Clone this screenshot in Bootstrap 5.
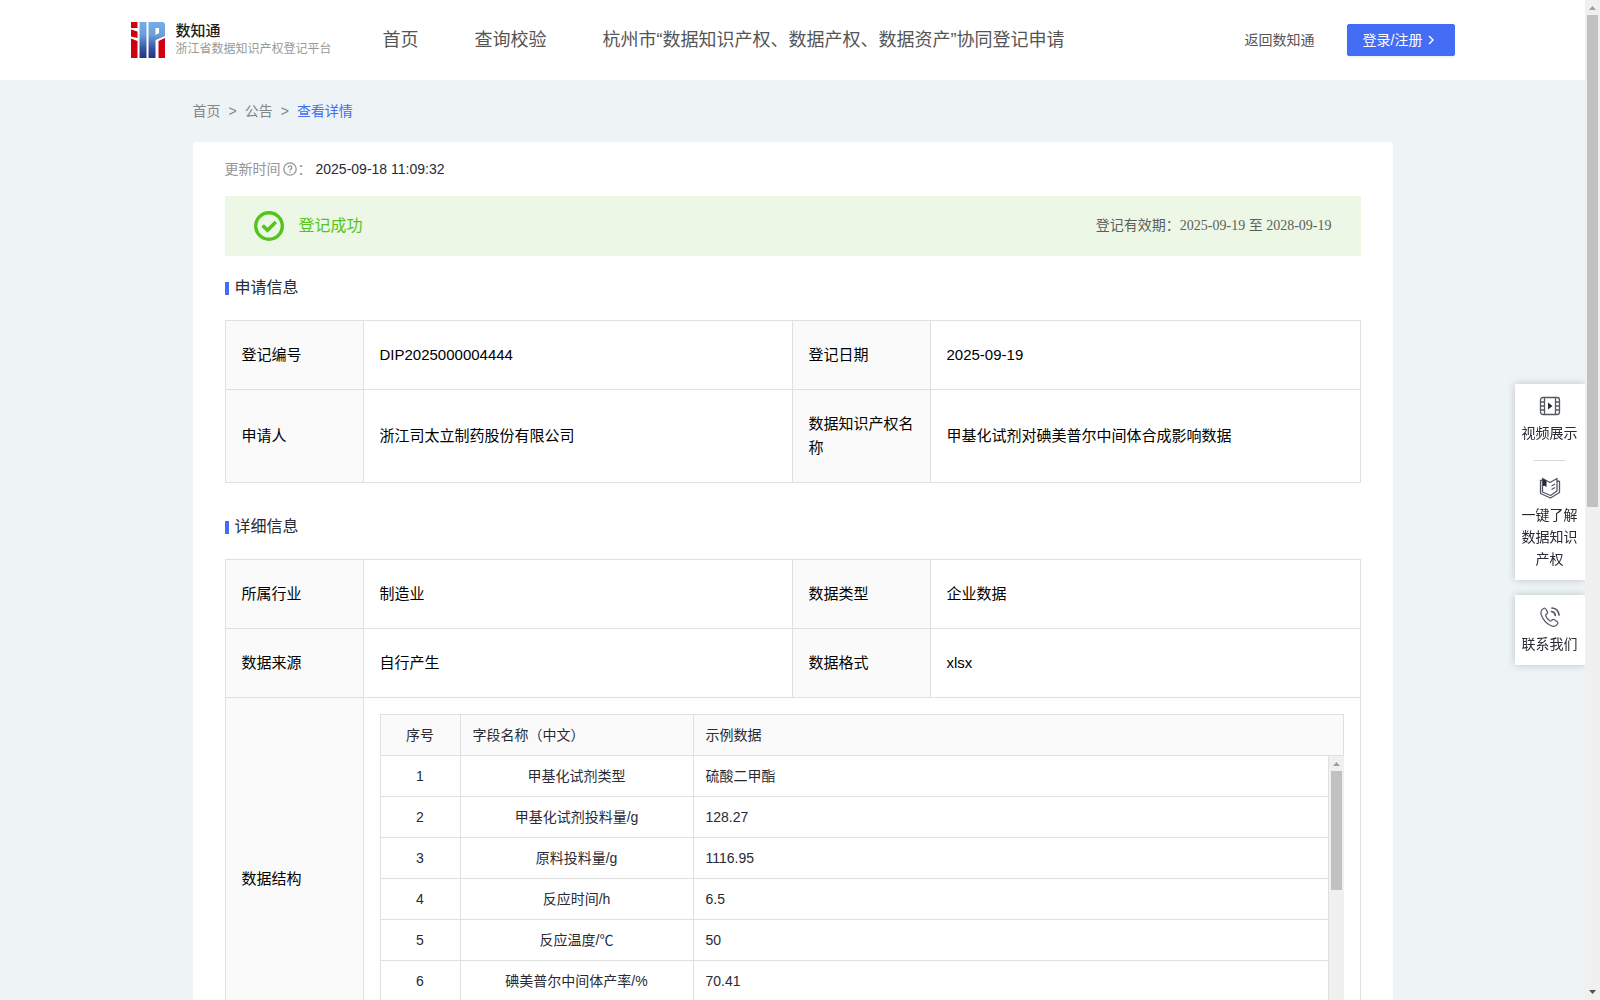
<!DOCTYPE html>
<html lang="zh-CN">
<head>
<meta charset="utf-8">
<meta name="viewport" content="width=device-width, initial-scale=1">
<title>数知通 - 查看详情</title>
<link href="https://cdn.jsdelivr.net/npm/bootstrap@5.3.0/dist/css/bootstrap.min.css" rel="stylesheet">
<style>
:root { --brand: #446df5; --line: #e0e0e0; --ink: #282a35; }
body { font-family: "Liberation Sans", "Noto Sans CJK SC", sans-serif; font-size: 14px; line-height: 22px; color: var(--ink); background: #eef3f6; }
a { text-decoration: none; }
.site-head { height: 80px; }
.head-inner { max-width: 1324px; }
.brand-name { font-size: 15px; line-height: 18px; font-weight: 500; color: #1c1c1c; font-family: "Noto Sans CJK SC", sans-serif; }
.brand-sub { font-size: 12px; line-height: 20px; color: #999; }
.brand-box { width: 224px; gap: 11px; }
.main-nav { gap: 56px; margin-left: 28px; }
.main-nav a { font-size: 18px; line-height: 26px; color: #555; }
.back-link { color: #555; margin-right: 32px; }
.login-btn { --bs-btn-font-size: 14px; --bs-btn-bg: var(--brand); --bs-btn-border-color: var(--brand); --bs-btn-border-radius: 2px; height: 32px; padding: 0 15px; width: 108px; box-shadow: 0 2px 0 rgba(0,0,0,.05); }
.page-col { max-width: 1200px; }
.crumbs { --bs-breadcrumb-divider: ">"; --bs-breadcrumb-item-padding-x: 8px; --bs-breadcrumb-margin-bottom: 0; --bs-breadcrumb-divider-color: #858585; padding: 20px 0; }
.crumbs a { color: #858585; }
.crumbs .active { color: var(--brand); }
.sheet { border-radius: 4px; padding: 16px 32px 32px; }
.muted-label { color: #959595; }
.help-mark { margin: 0 1px 0 2px; }
.ok-banner { height: 60px; background: #ecf7e6; padding: 0 29px; margin-top: 16px; }
.ok-text { font-size: 16px; color: #52c41a; margin-left: 15px; }
.valid-text { font-family: "Liberation Serif", "Noto Sans CJK SC", serif; color: #5c5f5a; }
.sect { font-size: 16px; line-height: 24px; font-weight: 400; margin: 20px 0; gap: 6px; }
.sect::before { content: ""; width: 4px; height: 13px; background: var(--brand); margin-top: 1px; }
.info-table { width: 100%; table-layout: fixed; border-collapse: separate; border-spacing: 0; border: solid var(--line); border-width: 1px 0 0 1px; font-size: 15px; line-height: 24px; color: #000; }
.info-table > tbody > tr > * { border: solid var(--line); border-width: 0 1px 1px 0; padding: 22px 16px; font-weight: 400; vertical-align: middle; }
.info-table > tbody > tr > th { background: #fafafa; }
.info-table > tbody > tr > .nest { padding: 16px; }
.info-table + .sect { margin-top: 32px; }
.w-label { width: 138px; }
.w-value { width: 429px; }
.grid-box { border: solid var(--line); border-width: 1px 0 0 1px; font-size: 14px; line-height: 22px; color: var(--ink); }
.grid-box table { width: 100%; table-layout: fixed; border-collapse: separate; border-spacing: 0; }
.grid-box th, .grid-box td { border: solid var(--line); border-width: 0 1px 1px 0; padding: 9px 12px; font-weight: 400; }
.grid-box th { background: #fafafa; }
.w-no { width: 80px; }
.w-field { width: 233px; }
.grid-body { height: 287px; }
.bar-track { width: 15px; background: #f0f0f0; padding: 0 2px; }
.bar-arrow { height: 15px; width: 11px; }
.bar-thumb { background: #c1c1c1; }
.thumb-grid { height: 119px; }
.thumb-page { height: 50.7%; }
.side-dock { right: 15px; top: 384px; width: 70px; gap: 15px; }
.side-card { background: #fff; box-shadow: 0 0 8px rgba(0,0,0,.2); padding: 11px 7px 10px 6px; clip-path: inset(-10px 0 -10px -10px); }
.side-card a { color: var(--ink); gap: 5px; }
.side-card hr { width: 32px; border-color: #a0a0a0; opacity: .4; margin: 16px auto; }
</style>
<script src="https://cdn.jsdelivr.net/npm/bootstrap@5.3.0/dist/js/bootstrap.bundle.min.js"></script>
</head>
<body class="vh-100 overflow-hidden d-flex">

<div class="flex-fill overflow-hidden">
  <header class="site-head bg-white d-flex align-items-center">
    <div class="head-inner w-100 mx-auto d-flex align-items-center">
      <a href="#" class="brand-box d-flex align-items-center flex-shrink-0">
        <svg width="34" height="36" viewBox="0 0 34 36" aria-hidden="true">
          <defs><linearGradient id="blue" x1="0" y1="0" x2="0" y2="36" gradientUnits="userSpaceOnUse"><stop offset="0" stop-color="#74aee6"/><stop offset=".35" stop-color="#6d9fdb"/><stop offset=".75" stop-color="#34509e"/><stop offset="1" stop-color="#223580"/></linearGradient></defs>
          <path fill="#d2000f" d="M0 0h6.500v6H0zM0 7.500l6.500 2V16L0 14.500zM0 16.500L6.500 19v17H0zM27.500 19l6.500-3v20h-6.500z"/>
          <path fill="url(#blue)" fill-rule="evenodd" d="M8.500 0h7v36h-7zM17.500 0H31q3 0 3 3v11l-9.500 4v18h-7zM24.500 6v7l3.500-2V6z"/>
        </svg>
        <span>
          <span class="brand-name d-block">数知通</span>
          <span class="brand-sub d-block">浙江省数据知识产权登记平台</span>
        </span>
      </a>
      <nav class="main-nav d-flex text-nowrap">
        <a href="#">首页</a>
        <a href="#">查询校验</a>
        <a href="#">杭州市“数据知识产权、数据产权、数据资产”协同登记申请</a>
      </nav>
      <a href="#" class="back-link ms-auto text-nowrap">返回数知通</a>
      <button type="button" class="login-btn btn btn-primary d-flex align-items-center text-nowrap">登录/注册
        <svg class="ms-1" width="10" height="10" viewBox="0 0 10 10" fill="none" stroke="#fff" stroke-width="1.400" aria-hidden="true"><path d="M3 1l4 4-4 4"/></svg>
      </button>
    </div>
  </header>

  <main class="page-col mx-auto">
    <nav aria-label="breadcrumb">
      <ol class="breadcrumb crumbs">
        <li class="breadcrumb-item"><a href="#">首页</a></li>
        <li class="breadcrumb-item"><a href="#">公告</a></li>
        <li class="breadcrumb-item active" aria-current="page">查看详情</li>
      </ol>
    </nav>

    <div class="sheet bg-white">
      <div class="d-flex align-items-center">
        <span class="muted-label">更新时间</span>
        <svg class="help-mark" width="14" height="14" viewBox="0 0 14 14" fill="none" stroke="#959595" stroke-width="1.300" aria-hidden="true"><circle cx="7" cy="7" r="6.200"/><path d="M5.200 5.600a1.800 1.800 0 1 1 2.500 1.700q-.7.300-.7 1.200M7 9.600v1.200"/></svg>
        <span class="muted-label">：</span>
        <span class="ms-1">2025-09-18 11:09:32</span>
      </div>

      <div class="ok-banner d-flex align-items-center">
        <svg width="30" height="30" viewBox="0 0 30 30" fill="none" stroke="#52c41a" aria-hidden="true"><circle cx="15" cy="15" r="13.300" stroke-width="3.400"/><path d="M8.600 14.400l4.900 4.900 8.300-8.300" stroke-width="3.600"/></svg>
        <span class="ok-text">登记成功</span>
        <span class="valid-text ms-auto">登记有效期：2025-09-19 至 2028-09-19</span>
      </div>

      <h2 class="sect d-flex align-items-center">申请信息</h2>
      <table class="info-table">
        <colgroup><col class="w-label"><col class="w-value"><col class="w-label"><col></colgroup>
        <tbody>
          <tr><th scope="row">登记编号</th><td>DIP2025000004444</td><th scope="row">登记日期</th><td>2025-09-19</td></tr>
          <tr><th scope="row">申请人</th><td>浙江司太立制药股份有限公司</td><th scope="row">数据知识产权名称</th><td>甲基化试剂对碘美普尔中间体合成影响数据</td></tr>
        </tbody>
      </table>

      <h2 class="sect d-flex align-items-center">详细信息</h2>
      <table class="info-table">
        <colgroup><col class="w-label"><col class="w-value"><col class="w-label"><col></colgroup>
        <tbody>
          <tr><th scope="row">所属行业</th><td>制造业</td><th scope="row">数据类型</th><td>企业数据</td></tr>
          <tr><th scope="row">数据来源</th><td>自行产生</td><th scope="row">数据格式</th><td>xlsx</td></tr>
          <tr>
            <th scope="row">数据结构</th>
            <td colspan="3" class="nest">
              <div class="grid-box">
                <table>
                  <colgroup><col class="w-no"><col class="w-field"><col></colgroup>
                  <thead><tr><th scope="col" class="text-center">序号</th><th scope="col">字段名称（中文）</th><th scope="col">示例数据</th></tr></thead>
                </table>
                <div class="grid-body d-flex overflow-hidden">
                  <div class="flex-fill">
                    <table aria-label="字段示例">
                      <colgroup><col class="w-no"><col class="w-field"><col></colgroup>
                      <tbody>
                        <tr><td class="text-center">1</td><td class="text-center">甲基化试剂类型</td><td>硫酸二甲酯</td></tr>
                        <tr><td class="text-center">2</td><td class="text-center">甲基化试剂投料量/g</td><td>128.27</td></tr>
                        <tr><td class="text-center">3</td><td class="text-center">原料投料量/g</td><td>1116.95</td></tr>
                        <tr><td class="text-center">4</td><td class="text-center">反应时间/h</td><td>6.5</td></tr>
                        <tr><td class="text-center">5</td><td class="text-center">反应温度/℃</td><td>50</td></tr>
                        <tr><td class="text-center">6</td><td class="text-center">碘美普尔中间体产率/%</td><td>70.41</td></tr>
                      </tbody>
                    </table>
                  </div>
                  <div class="bar-track d-flex flex-column" aria-hidden="true">
                    <svg class="bar-arrow flex-shrink-0" viewBox="0 0 11 15"><path fill="#a0a0a0" d="M2 10l3.500-4L9 10z"/></svg>
                    <div class="bar-thumb thumb-grid"></div>
                  </div>
                </div>
              </div>
            </td>
          </tr>
        </tbody>
      </table>
    </div>
  </main>
</div>

<aside class="side-dock position-fixed d-flex flex-column text-center">
  <div class="side-card">
    <a href="#" class="d-flex flex-column align-items-center">
      <svg width="22" height="22" viewBox="0 0 22 22" fill="none" stroke="#555862" stroke-width="1.300" aria-hidden="true"><rect x="1.500" y="2.500" width="19" height="17" rx="2.500"/><path d="M5.500 2.500v17M16.500 2.500v17M1.500 7h4M1.500 11h4M1.500 15h4M16.500 7h4M16.500 11h4M16.500 15h4"/><path d="M9 7.500v7l4.500-3.500z" fill="#252a3a" stroke="none"/></svg>
      <span>视频展示</span>
    </a>
    <hr>
    <a href="#" class="d-flex flex-column align-items-center">
      <svg width="22" height="22" viewBox="0 0 22 22" fill="none" stroke="#555862" stroke-width="1.300" stroke-linejoin="round" aria-hidden="true"><path d="M3.500 1.500L11 5.500 18 1.500V14l-6.500 4.500-8-3.500zM3 3.500H1.500v13l10 4.500 9-5.500V4.500L18.500 4"/><path d="M12.500 9l3.500-2M12.500 12.500l3.500-2"/><path d="M4 1.800l3.500 2v6.500L5.700 8.800 4 9z" fill="#252a3a" stroke="none"/></svg>
      <span>一键了解数据知识产权</span>
    </a>
  </div>
  <div class="side-card">
    <a href="#" class="d-flex flex-column align-items-center">
      <svg width="22" height="22" viewBox="0 0 22 22" fill="none" stroke="#555862" stroke-width="1.200" stroke-linejoin="round" stroke-linecap="round" aria-hidden="true"><path d="M4.500 2.500C2 4 1.300 6.500 2.500 9.500c1.800 4.500 5 8 9 10 3 1.400 5.500 1 7-1.500.6-1 .3-2-.6-2.600l-2.400-1.600c-1-.6-2-.4-2.600.4-.6 1-1.500 1-2.400.4-1.700-1.200-2.900-2.700-3.600-4.400-.4-.9 0-1.600.8-2.100.9-.6 1.100-1.500.6-2.500L7 3.200c-.6-1-1.500-1.300-2.500-.7z"/><path d="M12.500 5.500q3.300.4 3.800 3.800M13 2q6.300.6 7 7" stroke-width="1.700"/></svg>
      <span>联系我们</span>
    </a>
  </div>
</aside>

<div class="bar-track d-flex flex-column flex-shrink-0" aria-hidden="true">
  <svg class="bar-arrow flex-shrink-0" viewBox="0 0 11 15"><path fill="#a0a0a0" d="M2 10l3.500-4L9 10z"/></svg>
  <div class="flex-fill"><div class="bar-thumb thumb-page"></div></div>
  <svg class="bar-arrow flex-shrink-0" viewBox="0 0 11 15"><path fill="#505050" d="M2 5l3.500 4L9 5z"/></svg>
</div>
</body>
</html>
